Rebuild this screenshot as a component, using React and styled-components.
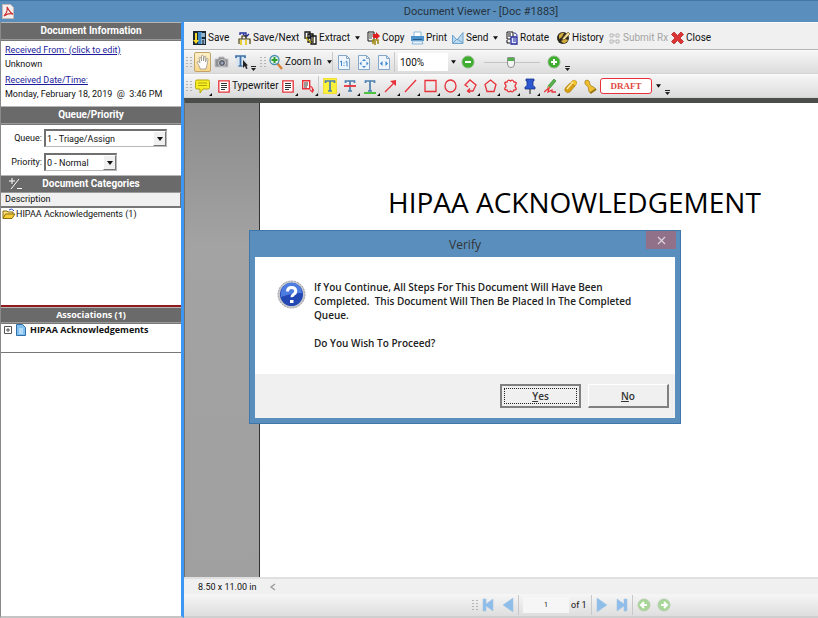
import React from 'react';
import styled, { createGlobalStyle, css } from 'styled-components';

const colors = {
  frame: '#5a8fbd',
  frameDark: '#3f77a8',
  header: '#6a6a6a',
  splitter: '#3d96f2',
  link: '#1c1c9c',
  red: '#e8323a',
  text: '#111',
};

const uiFont = 'Roboto, sans-serif';
const wideFont = '"Open Sans", sans-serif';

const GlobalStyle = createGlobalStyle`
  * { box-sizing: border-box; }
  body {
    margin: 0;
    font-family: ${uiFont};
    font-size: 10px;
    line-height: 14px;
    color: ${colors.text};
    background: #fff;
  }
  button, input, select { font: inherit; color: inherit; }
  svg { display: block; flex: none; }
`;

const Window = styled.div`
  position: relative;
  display: flex;
  flex-direction: column;
  height: 100vh;
  overflow: hidden;
`;

const TitleBar = styled.header`
  display: flex;
  flex: none;
  align-items: center;
  height: 22px;
  padding: 0 2px;
  background: ${colors.frame};
  border-top: 1px solid ${colors.frameDark};
`;

const WindowTitle = styled.h1`
  flex: 1;
  margin: 0;
  padding-left: 132px;
  text-align: center;
  font-size: 11px;
  font-weight: 400;
  line-height: 20px;
  color: #26333f;
`;

const Main = styled.div`
  display: flex;
  flex: 1;
  min-height: 0;
`;

// Left side panel
const Sidebar = styled.aside`
  display: flex;
  flex-direction: column;
  flex: none;
  width: 184px;
  background: #fff;
  border-left: 1px solid #8a8a8a;
  border-right: 3px solid ${colors.splitter};
  border-bottom: 2px solid #c4c4c4;
`;

const PanelHeader = styled.h2`
  display: flex;
  align-items: center;
  justify-content: center;
  flex: none;
  position: relative;
  height: ${props => (props.$small ? '16px' : '18px')};
  margin: 0;
  background: ${colors.header};
  border-top: 1px solid #b5b5b5;
  border-bottom: 1px solid #9a9a9a;
  color: #fff;
  font-family: ${props => (props.$small ? wideFont : uiFont)};
  font-size: ${props => (props.$small ? '9px' : '10px')};
  font-weight: 700;
  line-height: 14px;
`;

const HeaderTool = styled.button`
  position: absolute;
  left: 8px;
  top: 1px;
  padding: 0;
  border: 0;
  background: none;
`;

const Panel = styled.div`
  flex: ${props => (props.$grow ? '1' : 'none')};
  height: ${props => props.$h || 'auto'};
  padding: ${props => props.$pad || '0'};
  border-top: 1px solid #777;
`;

const InfoLink = styled.a`
  display: block;
  color: ${colors.link};
  font-size: 9px;
`;

const InfoText = styled.p`
  margin: 0 0 2px;
  font-size: 9px;
  white-space: pre;
`;

const Field = styled.div`
  display: grid;
  grid-template-columns: 41px auto;
  justify-content: start;
  column-gap: 2px;
  align-items: center;
  margin-bottom: 6px;
  font-size: 9px;

  label { text-align: right; }
`;

const SelectBox = styled.div`
  position: relative;
  width: ${props => props.$w};

  select {
    width: 100%;
    height: 18px;
    padding: 0 1px;
    border: 1px solid #b8b8b8;
    border-top: 2px solid #707070;
    border-left: 2px solid #707070;
    border-radius: 0;
    background: #fff;
    appearance: none;
  }
`;

const SelectArrow = styled.span`
  position: absolute;
  right: 1px;
  top: 2px;
  display: grid;
  place-items: center;
  width: 13px;
  height: 15px;
  background: #f0f0f0;
  border: 1px solid #fff;
  border-right-color: #777;
  border-bottom-color: #777;
  pointer-events: none;
`;

const ColumnHead = styled.div`
  height: 14px;
  padding: 0 4px;
  background: #f0f0f0;
  border-right: 1px solid #777;
  border-bottom: 1px solid #777;
  font-size: 9px;
  line-height: 13px;
`;

const TreeItem = styled.div`
  display: flex;
  align-items: center;
  gap: ${props => (props.$bold ? '4px' : '0')};
  padding: ${props => (props.$bold ? '0 3px' : '0 1px')};
  font-family: ${props => (props.$bold ? wideFont : uiFont)};
  font-size: 9px;
  font-weight: ${props => (props.$bold ? 700 : 400)};
  line-height: 12px;
`;

const RedRule = styled.hr`
  flex: none;
  width: 100%;
  height: 2px;
  margin: 0;
  border: 0;
  background: #8f1a20;
`;

// Viewer side
const Viewer = styled.main`
  display: flex;
  flex-direction: column;
  flex: 1;
  min-width: 0;
`;

const Toolbar = styled.div`
  display: flex;
  align-items: center;
  flex: none;
  height: ${props => (props.$top ? '28px' : '24px')};
  padding: ${props => (props.$top ? '3px 0 0 9px' : '0 0 0 2px')};
  border-top: 1px solid #fafafa;
  border-bottom: 1px solid ${props => (props.$top ? '#b4b4b4' : '#d4d4d4')};
  background: ${props => (props.$top ? '#f0f0f0' : 'linear-gradient(#f6f6f6, #dcdcdc)')};
`;

const Command = styled.button`
  display: flex;
  align-items: center;
  flex: none;
  gap: 2px;
  width: ${props => props.$w};
  padding: 0;
  border: 0;
  background: none;
  white-space: nowrap;

  &:disabled { color: #a4a4a4; }
`;

const Tool = styled.button`
  position: relative;
  display: grid;
  place-items: center;
  flex: none;
  width: 20px;
  height: 22px;
  padding: 0;
  border: 0;
  background: none;

  ${props => props.$active && css`
    background: linear-gradient(#fdf0c8, #f9d68a);
    border: 1px solid #c2a468;
    border-radius: 2px;
    width: 17px;
    height: 20px;
  `}

  ${props => props.$corner && css`
    &::after {
      content: '';
      position: absolute;
      right: 0;
      bottom: 1px;
      border-left: 3px solid transparent;
      border-bottom: 3px solid #111;
    }
  `}
`;

const Divider = styled.i`
  flex: none;
  width: 1px;
  height: 20px;
  margin-right: ${props => props.$gap || '3px'};
  background: #c8c8c8;
`;

const Space = styled.i`
  flex: none;
  width: ${props => props.$w};
`;

const ZoomInput = styled.input`
  flex: none;
  width: 50px;
  height: 18px;
  padding: 0 2px;
  border: 0;
  background: #fff;
`;

const ZoomSlider = styled.input`
  flex: none;
  width: 56px;
  height: 14px;
  margin: 0 7px 0 9px;
  appearance: none;
  background: linear-gradient(#c4c4c4, #c4c4c4) center / 100% 1px no-repeat;

  &::-webkit-slider-thumb {
    appearance: none;
    width: 8px;
    height: 11px;
    border: 1px solid #8b938b;
    border-radius: 1px 1px 4px 4px;
    background: linear-gradient(#50b04a 3px, #f4f4f4 3px);
  }
`;

const Overflow = styled.span`
  align-self: flex-end;
  flex: none;
  margin-bottom: 2px;
`;

const DraftStamp = styled.button`
  flex: none;
  width: 52px;
  height: 16px;
  margin: 0 4px 0 0;
  padding: 0;
  border: 1px solid ${colors.red};
  border-radius: 3px;
  background: #fff;
  color: #e0463c;
  font-family: "Liberation Serif", serif;
  font-size: 9px;
  font-weight: 700;
  line-height: 13px;
`;

const Canvas = styled.div`
  flex: 1;
  min-height: 0;
  padding-left: 74px;
  border-top: 5px solid #4b4d4b;
  border-left: 1px solid #707070;
  background: linear-gradient(#8b8b8b, #a3a3a3 30%, #a0a0a0);
`;

const Page = styled.article`
  height: 100%;
  padding-top: 80px;
  border-left: 1px solid #333;
  background: #fff;
`;

const PageHeading = styled.h2`
  margin: 0;
  padding-left: 128px;
  font-family: ${wideFont};
  font-size: 28px;
  font-weight: 400;
  line-height: 38px;
  color: #000;
  white-space: nowrap;
`;

const StatusBar = styled.div`
  display: flex;
  align-items: center;
  flex: none;
  height: 17px;
  border-top: 2px solid #e0e0e0;
  background: #f0f0f0;

  span {
    width: 84px;
    padding-left: 14px;
    font-size: 9px;
    white-space: nowrap;
  }
`;

const Pager = styled.nav`
  display: flex;
  align-items: center;
  flex: none;
  height: 24px;
  padding-left: 288px;
  border-bottom: 2px solid #cfcfcf;
  background: linear-gradient(#f6f6f6, #dedede);
`;

const PageInput = styled.input`
  flex: none;
  width: 46px;
  height: 16px;
  margin: 0 2px 0 2px;
  padding: 0;
  border: 0;
  background: #f6f6f6;
  text-align: center;
  font-size: 7px;
`;

const PageCount = styled.span`
  flex: none;
  width: 20px;
  white-space: nowrap;
  font-size: 9px;
`;

// Confirmation dialog
const Dialog = styled.section`
  position: absolute;
  left: 249px;
  top: 230px;
  width: 432px;
  padding: 0 5px 5px;
  border: 1px solid ${colors.frameDark};
  background: ${colors.frame};
  font-family: ${wideFont};
`;

const DialogTitle = styled.h2`
  margin: 0;
  height: 26px;
  text-align: center;
  font-size: 12px;
  font-weight: 400;
  line-height: 28px;
  color: #333;
`;

const DialogClose = styled.button`
  position: absolute;
  right: 4px;
  top: 0;
  display: grid;
  place-items: center;
  width: 30px;
  height: 18px;
  padding: 0;
  border: 0;
  background: #91708a;
`;

const DialogBody = styled.div`
  display: flex;
  gap: 8px;
  height: 117px;
  padding: 23px 22px;
  background: #fff;
  font-weight: 600;
  color: #222;

  p { margin: 0 0 14px; }
`;

const DialogFooter = styled.div`
  display: flex;
  justify-content: flex-end;
  gap: 7px;
  height: 44px;
  padding: 10px 6px;
  background: #f0f0f0;
`;

const DialogButton = styled.button`
  width: 81px;
  height: 24px;
  padding: 0;
  border: 1px solid #fff;
  border-right: 2px solid #808080;
  border-bottom: 2px solid #808080;
  background: #f0f0f0;
  font-size: 10px;
  font-weight: 600;
  line-height: 18px;
  color: #333;

  ${props => props.$primary && css`
    border: 2px solid #808080;
    outline: 1px dotted #222;
    outline-offset: -5px;
  `}
`;

// Icons
const Svg = ({ w = 14, h = 14, box, children }) => (
  <svg width={w} height={h} viewBox={box || `0 0 ${w} ${h}`} fill="none" aria-hidden="true">
    {children}
  </svg>
);

const Caret = ({ w = 6 }) => (
  <Svg w={w} h={4} box="0 0 6 4"><path d="M0 0h6L3 4z" fill="#111" /></Svg>
);

const MoreIcon = () => (
  <Svg w={5} h={5}><path d="M0 0h5v1H0zM0 2h5L2.500 5z" fill="#222" /></Svg>
);

const Grip = () => (
  <Svg w={6} h={12}>
    {[1, 4, 7, 10].map(y => (
      <path key={y} d={`M0 ${y}h2v1H0zM4 ${y}h2v1H4z`} fill="#b4b4b4" />
    ))}
  </Svg>
);

const PdfIcon = () => (
  <Svg w={12} h={15}>
    <path d="M0.5 0.5h8l3 3v11h-11z" fill="#f4f0f0" stroke="#c9b8b8" />
    <path d="M2 12C4 10 6 6 5 3c3 5 3 6 6 7-4-1-6 0-9 2z" stroke="#cf2f2f" strokeWidth="1.3" />
  </Svg>
);

const SaveIcon = () => (
  <Svg w={13} h={14}>
    <path d="M0 0h13v14H0z" fill="#1a2630" />
    <path d="M5 1h4v12H5z" fill="#3f86c4" />
    <path d="M8 2h4v4H8zM8 8h4v5H8z" fill="#8fb4cc" />
    <path d="M2 2h2v7h2l-3 4-3-4h2z" fill="#f7dc2e" />
    <path d="M10 9v4" stroke="#111" />
  </Svg>
);

const SaveNextIcon = () => (
  <Svg w={13} h={14}>
    <path d="M2 4V2h6v3M5 3l3 3 3-3" stroke="#23309a" strokeWidth="1.400" />
    <path d="M1 13V8h11v5M4 8V5h4v3" stroke="#4c4310" strokeWidth="1.200" />
    <path d="M2 9h2v5H2zM7 9h2v5H7z" fill="#e8cf38" />
  </Svg>
);

const ExtractIcon = () => (
  <Svg w={13} h={14}>
    <path d="M1 1h5v6H1zM4 3h5v8H4zM7 5h5v8H7z" fill="#fff" stroke="#111" strokeWidth="1.300" />
    <path d="M2 6l2 4M5 9l2 3" stroke="#b5a21c" strokeWidth="1.500" />
    <path d="M9 7v4" stroke="#8b8330" />
  </Svg>
);

const CopyIcon = () => (
  <Svg w={13} h={14}>
    <path d="M1 1h6v9H1z" fill="#fff" stroke="#111" />
    <path d="M2 3h4M2 5h4M2 7h3" stroke="#444" />
    <path d="M6 3h3V1l4 4-4 4V7H6z" fill="#e02020" />
    <path d="M6 13V9h5v4M8 10v4" stroke="#a08c16" strokeWidth="1.600" />
  </Svg>
);

const PrintIcon = () => (
  <Svg w={13} h={14}>
    <path d="M3 1h7v5H3z" fill="#fff" stroke="#8cb6d8" />
    <path d="M0 5h13v5H0z" fill="#4d94cc" />
    <path d="M2 8h9v1H2z" fill="#245b8c" />
    <path d="M2 10h9l1 3H1z" fill="#e6f1fa" stroke="#8cb6d8" />
  </Svg>
);

const SendIcon = () => (
  <Svg w={12} h={14}>
    <path d="M0.5 4L5 9l6-7.500V12.500H0.500z" fill="#b9d7ee" stroke="#6da3cc" />
    <path d="M1 12l4-4 6 4" stroke="#6da3cc" />
  </Svg>
);

const RotateIcon = () => (
  <Svg w={12} h={14}>
    <path d="M1 1h6v7H1z" fill="#fff" stroke="#111" />
    <path d="M2 3h3M2 5h3M1 9v3h3" stroke="#111" />
    <path d="M5 6h6v7H5z" fill="#dfe4ff" stroke="#22289a" strokeWidth="1.300" />
    <path d="M7 8h3M7 10h3M8 2c2 0 3 1 3 3" stroke="#22289a" />
  </Svg>
);

const HistoryIcon = () => (
  <Svg w={13} h={14}>
    <circle cx="6" cy="7" r="6" fill="#2d2a20" />
    <path d="M2 4q3-3 5-2L5 6 2 8zM4 10l4-2 3 1q-2 4-5 3z" fill="#d2ab3a" />
    <path d="M5 8l6-7 2 2-6 6z" fill="#f2dfa0" stroke="#6b541a" strokeWidth=".6" />
  </Svg>
);

const SubmitIcon = () => (
  <Svg w={12} h={12}>
    <path d="M1 2h3v3H1zM7 2h3v3H7zM1 8h3v3H1zM7 8h3v3H7zM4 3h2M4 9h2" stroke="#b6b6b6" />
  </Svg>
);

const CloseIcon = () => (
  <Svg w={13} h={14}>
    <path d="M3 1l3.500 3.500L10 1l2.500 2.500L9 7l3.500 3.500L10 13 6.500 9.500 3 13 .5 10.500 4 7 .5 3.500z" fill="#dc3434" stroke="#b52a2a" strokeWidth=".8" />
  </Svg>
);

const HandIcon = () => (
  <Svg w={13} h={16}>
    <path d="M4 14C3 11 1 9 1 8c1-1 2 0 3 1L3 4c0-1 1.500-1 2 0l.5 3V2c0-1 1.500-1 2 0v5l.7-4c.3-1 1.600-1 1.600 0L9.500 8l1-3c.5-1 1.500-.5 1.500.5L11 11l-1 4H4z" fill="#fff" stroke="#9a9488" strokeWidth=".8" />
  </Svg>
);

const CameraIcon = () => (
  <Svg w={15} h={14}>
    <path d="M1 4h3l1-2h5l1 2h3v8H1z" fill="#8f9094" stroke="#c4c4c8" />
    <circle cx="8" cy="8" r="3.500" fill="#5a5c64" stroke="#d2d2d6" />
    <circle cx="8" cy="8" r="1.500" fill="#9aa6c0" />
  </Svg>
);

const SelectTextIcon = () => (
  <Svg w={13} h={14}>
    <path d="M1 1h10v10H1z" fill="#d8e4f0" />
    <path d="M1 3V1h9v2M5.500 1v10M3.500 11h4" stroke="#3e71a8" strokeWidth="1.700" />
    <path d="M8 5v8l2-2 1 3 1.500-.5-1-3H13z" fill="#222" />
  </Svg>
);

const MagnifierIcon = () => (
  <Svg w={14} h={16}>
    <path d="M8 9l5 6" stroke="#d98236" strokeWidth="2.500" />
    <circle cx="5.500" cy="6" r="4.500" fill="#e3f3f0" stroke="#4a8fae" strokeWidth="1.300" />
    <path d="M5.500 3v6M2.500 6h6" stroke="#2fa02c" strokeWidth="2" />
  </Svg>
);

const PageIcon = ({ kind }) => (
  <Svg w={12} h={15}>
    <path d="M.5.5h8l3 3v11H.5z" fill="#eef5fc" stroke="#86a8c8" />
    <path d="M8.500.5v3h3" stroke="#86a8c8" />
    {kind === 'one' && <path d="M2 7l1.500-1v5M9 6.500v5M7.500 7L9 6M6 7.500v1M6 10v1" stroke="#3d86cc" />}
    {kind === 'fit' && <path d="M6 4l2 2H4zM6 13l2-2H4zM1.500 8.500l2-2v4zM10.500 8.500l-2-2v4z" fill="#3d86cc" />}
    {kind === 'width' && <path d="M2 8.500L4.500 6v5zM10 8.500L7.500 6v5z" fill="#3d86cc" />}
  </Svg>
);

const RoundIcon = ({ d, soft }) => (
  <Svg w={14} h={14}>
    <circle cx="7" cy="7" r="6" fill={soft ? '#a6d796' : '#3fae30'} stroke={soft ? '#b8cdb2' : '#8cb884'} />
    <path d={d} stroke="#fff" strokeWidth="2" />
  </Svg>
);

const NoteIcon = () => (
  <Svg w={15} h={15}>
    <path d="M2 1h11q1.500 0 1.500 1.500v6Q14.500 10 13 10H8l-3 4v-4H2Q.5 10 .5 8.500v-6Q.5 1 2 1z" fill="#f6ee22" stroke="#b4a80c" />
    <path d="M3 4h9M3 6.500h9" stroke="#b4a80c" />
  </Svg>
);

const TextBoxIcon = () => (
  <Svg w={12} h={13}>
    <path d="M.8.8h10.400v11.400H.8z" fill="#fff" stroke={colors.red} strokeWidth="1.300" />
    <path d="M3 3.500h6M3 5.500h6M3 7.500h6M3 9.500h4" stroke="#333" />
  </Svg>
);

const CalloutIcon = () => (
  <Svg w={12} h={13}>
    <path d="M.7.7h7v8h-7z" fill="#fff" stroke={colors.red} strokeWidth="1.400" />
    <path d="M2 3h4M2 5h4M2 7h3" stroke="#333" />
    <path d="M7 6c3 0 4 2 3.500 6M8 10l2.500 2L12 9" stroke={colors.red} strokeWidth="1.200" />
  </Svg>
);

const LetterIcon = ({ bg, line, y }) => (
  <Svg w={14} h={16}>
    {bg && <rect width="14" height="16" rx="2" fill={bg} stroke="#e3cf30" />}
    <path d="M2.500 5V3h9v2M7 3v10M5 13h4" stroke="#4a7faf" strokeWidth="1.700" />
    {line && <path d={`M1 ${y}h12`} stroke={line} strokeWidth="1.800" />}
  </Svg>
);

const Stroke = ({ d, head }) => (
  <Svg w={13} h={14}>
    <path d={d} stroke={colors.red} strokeWidth="1.300" />
    {head && <path d={head} fill={colors.red} />}
  </Svg>
);

const PinIcon = () => (
  <Svg w={12} h={16}>
    <path d="M2 1h8v2H9v5l2 1v2H1V9l2-1V3H2z" fill="#2d57d0" stroke="#17338c" strokeWidth=".8" />
    <path d="M6 11v5" stroke="#444" strokeWidth="1.300" />
  </Svg>
);

const PencilIcon = () => (
  <Svg w={13} h={16}>
    <path d="M10 1l2 2-6 7-2.500 1L4 8z" fill="#55b348" stroke="#2f7a26" strokeWidth=".6" />
    <path d="M4 8l2 2-3 2z" fill="#eec494" />
    <path d="M0 14l5-4-1 4 4-2 0 2 4 0" stroke={colors.red} strokeWidth="1.300" />
  </Svg>
);

const EraserIcon = () => (
  <Svg w={13} h={15}>
    <path d="M8 2q3-2 5 1 0 2-2 4L6 5z" fill="#f6c62a" stroke="#b38f1e" strokeWidth=".6" />
    <path d="M6 4l5 3-5 6q-3 2-5-1-1-2 1-4z" fill="#d99f12" stroke="#a57c14" strokeWidth=".6" />
    <path d="M9 3l-6 7" stroke="#fbe9a4" strokeWidth="1.500" />
  </Svg>
);

const StampIcon = () => (
  <Svg w={13} h={15}>
    <path d="M1 2q2-2 4 0 1 2 1 4l5 3 1 2-5 3.500-2-2-1-5Q2 6 1 5z" fill="#eec030" stroke="#a07a18" strokeWidth=".7" />
    <path d="M6 14l6-4" stroke="#8c6a12" strokeWidth="1.500" />
  </Svg>
);

const FolderIcon = () => (
  <Svg w={14} h={12}>
    <path d="M1 10V3h4l1 1h5v3" fill="#f8e27a" stroke="#8a6d10" />
    <path d="M1 10.500L3.500 6H13l-3 4.500z" fill="#f5cf35" stroke="#8a6d10" />
    <path d="M7 2q3-2 4 0l1 1" stroke="#2c4bc0" />
  </Svg>
);

const DocIcon = () => (
  <Svg w={10} h={12}>
    <path d="M.5.5h6l3 3v8h-9z" fill="#7fc0ee" stroke="#2f6ea8" />
    <path d="M3 5h4M3 7h4M3 9h4" stroke="#e6f4ff" />
  </Svg>
);

const QuestionIcon = () => (
  <Svg w={29} h={29}>
    <circle cx="14.500" cy="14.500" r="13.500" fill="#c6c8cc" stroke="#9c9ea4" strokeDasharray="2 1" />
    <circle cx="14.500" cy="14.500" r="11.500" fill="#2348b4" />
    <path d="M4 13a10.500 10.500 0 0121 0q-10 0-21 4z" fill="#4c7ce0" />
    <path d="M10.500 11.500q0-4 4-4t4.300 3.500q0 2-2 3.200t-1.800 3" stroke="#fff" strokeWidth="3" />
    <path d="M13 20h3.500v3H13z" fill="#fff" />
  </Svg>
);

const NavIcon = ({ d }) => (
  <Svg w={12} h={14}><path d={d} fill="#8dbde8" stroke="#a9c8e4" strokeWidth=".6" /></Svg>
);

const commands = [
  { label: 'Save', icon: <SaveIcon />, w: '45px' },
  { label: 'Save/Next', icon: <SaveNextIcon />, w: '66px' },
  { label: 'Extract', icon: <ExtractIcon />, w: '63px', menu: true },
  { label: 'Copy', icon: <CopyIcon />, w: '44px' },
  { label: 'Print', icon: <PrintIcon />, w: '41px' },
  { label: 'Send', icon: <SendIcon />, w: '54px', menu: true },
  { label: 'Rotate', icon: <RotateIcon />, w: '51px' },
  { label: 'History', icon: <HistoryIcon />, w: '52px' },
  { label: 'Submit Rx', icon: <SubmitIcon />, w: '62px', disabled: true },
  { label: 'Close', icon: <CloseIcon />, w: '45px' },
];

const drawTools = [
  { name: 'Arrow', icon: <Stroke d="M1 13L10 4" head="M12 1v6L6 2z" /> },
  { name: 'Line', icon: <Stroke d="M1 13L12 1" /> },
  { name: 'Rectangle', icon: <Stroke d="M1 1.500h11v11H1z" /> },
  { name: 'Oval', icon: <Stroke d="M6.500 1a5.500 6 0 100 12 5.500 6 0 100-12z" /> },
  { name: 'Polyline', icon: <Stroke d="M4 8L1 6l5-5 6 5-3 6H4M6 9.500L3.500 12 6 14" /> },
  { name: 'Polygon', icon: <Stroke d="M6.500 1L12 5.500 10 12.500H3L1 5.500z" /> },
  { name: 'Cloud', icon: <Stroke d="M3 3Q4 0 6.500 2 9 0 10 3q3 0 2 2-2 2 0 4 1 2-2 2-1 3-3.500 1Q4 14 3 11q-3 0-2-2 2-2 0-4-1-2 2-2z" /> },
  { name: 'Pin', icon: <PinIcon /> },
  { name: 'Pencil', icon: <PencilIcon /> },
];

const App = () => (
  <>
    <GlobalStyle />
    <Window>
      <TitleBar>
        <PdfIcon />
        <WindowTitle>Document Viewer - [Doc #1883]</WindowTitle>
      </TitleBar>

      <Main>
        <Sidebar>
          <PanelHeader>Document Information</PanelHeader>
          <Panel $h="66px" $pad="2px 4px">
            <InfoLink href="#from">Received From: (click to edit)</InfoLink>
            <InfoText>Unknown</InfoText>
            <InfoLink href="#date">Received Date/Time:</InfoLink>
            <InfoText>{'Monday, February 18, 2019  @  3:46 PM'}</InfoText>
          </Panel>

          <PanelHeader>Queue/Priority</PanelHeader>
          <Panel $h="51px" $pad="4px 0">
            <Field>
              <label htmlFor="queue">Queue:</label>
              <SelectBox $w="123px">
                <select id="queue"><option>1 - Triage/Assign</option></select>
                <SelectArrow><Caret /></SelectArrow>
              </SelectBox>
            </Field>
            <Field>
              <label htmlFor="priority">Priority:</label>
              <SelectBox $w="73px">
                <select id="priority"><option>0 - Normal</option></select>
                <SelectArrow><Caret /></SelectArrow>
              </SelectBox>
            </Field>
          </Panel>

          <PanelHeader>
            <HeaderTool aria-label="Expand or collapse">
              <Svg w={13} h={13}>
                <path d="M0 4h6M3 1v6M8 11.500h5M2 12L10 2" stroke="#fff" />
              </Svg>
            </HeaderTool>
            Document Categories
          </PanelHeader>
          <ColumnHead>Description</ColumnHead>
          <Panel $h="98px">
            <TreeItem><FolderIcon />HIPAA Acknowledgements (1)</TreeItem>
          </Panel>

          <RedRule />
          <PanelHeader $small>Associations (1)</PanelHeader>
          <Panel $h="29px">
            <TreeItem $bold>
              <Svg w={8} h={8}>
                <path d="M.5.5h7v7h-7zM2 4h4M4 2v4" stroke="#555" />
              </Svg>
              <DocIcon />
              HIPAA Acknowledgements
            </TreeItem>
          </Panel>
          <Panel $grow />
        </Sidebar>

        <Viewer>
          <Toolbar $top>
            {commands.map(({ label, icon, w, menu, disabled }) => (
              <Command key={label} $w={w} disabled={disabled}>
                {icon}
                {label}
                {menu && <><Space $w="1px" /><Caret w={5} /></>}
              </Command>
            ))}
          </Toolbar>

          <Toolbar>
            <Grip />
            <Space $w="2px" />
            <Tool $active aria-label="Hand"><HandIcon /></Tool>
            <Tool aria-label="Snapshot"><CameraIcon /></Tool>
            <Tool aria-label="Select text"><SelectTextIcon /></Tool>
            <Overflow><MoreIcon /></Overflow>
            <Space $w="4px" />
            <Grip />
            <Space $w="3px" />
            <Command $w="63px"><MagnifierIcon />Zoom In<Space $w="1px" /><Caret w={5} /></Command>
            <Divider $gap="1px" />
            <Tool aria-label="Actual size"><PageIcon kind="one" /></Tool>
            <Tool aria-label="Fit page"><PageIcon kind="fit" /></Tool>
            <Tool aria-label="Fit width"><PageIcon kind="width" /></Tool>
            <Divider />
            <ZoomInput aria-label="Zoom level" defaultValue="100%" />
            <Space $w="3px" />
            <Caret w={5} />
            <Space $w="5px" />
            <RoundIcon d="M4 7h6" />
            <ZoomSlider type="range" aria-label="Zoom" defaultValue="47" />
            <RoundIcon d="M4 7h6M7 4v6" />
            <Space $w="4px" />
            <Overflow><MoreIcon /></Overflow>
          </Toolbar>

          <Toolbar>
            <Grip />
            <Tool $corner aria-label="Note"><NoteIcon /></Tool>
            <Space $w="6px" />
            <Command $w="60px"><TextBoxIcon />Typewriter</Command>
            <Tool $corner aria-label="Text box"><TextBoxIcon /></Tool>
            <Tool $corner aria-label="Callout"><CalloutIcon /></Tool>
            <Divider $gap="1px" />
            <Tool $corner aria-label="Highlight"><LetterIcon bg="#fdf03a" /></Tool>
            <Tool $corner aria-label="Strike out"><LetterIcon line="#e8323a" y={8} /></Tool>
            <Tool $corner aria-label="Underline"><LetterIcon line="#3cc02c" y={15} /></Tool>
            {drawTools.map(({ name, icon }) => (
              <Tool key={name} $corner aria-label={name}>{icon}</Tool>
            ))}
            <Tool aria-label="Eraser"><EraserIcon /></Tool>
            <Tool aria-label="Stamp"><StampIcon /></Tool>
            <DraftStamp>DRAFT</DraftStamp>
            <Caret w={5} />
            <Space $w="4px" />
            <Overflow><MoreIcon /></Overflow>
          </Toolbar>

          <Canvas>
            <Page>
              <PageHeading>HIPAA ACKNOWLEDGEMENT</PageHeading>
            </Page>
          </Canvas>

          <StatusBar>
            <span>8.50 x 11.00 in</span>
            <Svg w={10} h={8}><path d="M7 1L3 4l4 3" stroke="#999" strokeWidth="1.300" /></Svg>
          </StatusBar>
          <Pager>
            <Grip />
            <Tool aria-label="First page"><NavIcon d="M1 1h3v5l7-5v12L4 8v5H1z" /></Tool>
            <Tool aria-label="Previous page"><NavIcon d="M11 0v14L1 7z" /></Tool>
            <Divider $gap="2px" />
            <PageInput aria-label="Page" defaultValue="1" />
            <PageCount>of 1</PageCount>
            <Divider $gap="0" />
            <Tool aria-label="Next page"><NavIcon d="M1 0v14L11 7z" /></Tool>
            <Tool aria-label="Last page"><NavIcon d="M11 1H8v5L1 1v12l7-5v5h3z" /></Tool>
            <Divider $gap="1px" />
            <Tool aria-label="Back"><RoundIcon soft d="M10 7H5M7 4L4 7l3 3" /></Tool>
            <Tool aria-label="Forward"><RoundIcon soft d="M4 7h5M7 4l3 3-3 3" /></Tool>
          </Pager>
        </Viewer>
      </Main>

      <Dialog role="dialog" aria-labelledby="verify-title">
        <DialogTitle id="verify-title">Verify</DialogTitle>
        <DialogClose aria-label="Close">
          <Svg w={9} h={9}><path d="M1 1l7 7M8 1L1 8" stroke="#dfd5dd" strokeWidth="1.200" /></Svg>
        </DialogClose>
        <DialogBody>
          <QuestionIcon />
          <div>
            <p>
              If You Continue, All Steps For This Document Will Have Been<br />
              Completed.&nbsp; This Document Will Then Be Placed In The Completed<br />
              Queue.
            </p>
            <p>Do You Wish To Proceed?</p>
          </div>
        </DialogBody>
        <DialogFooter>
          <DialogButton $primary><u>Y</u>es</DialogButton>
          <DialogButton><u>N</u>o</DialogButton>
        </DialogFooter>
      </Dialog>
    </Window>
  </>
);

export default App;
